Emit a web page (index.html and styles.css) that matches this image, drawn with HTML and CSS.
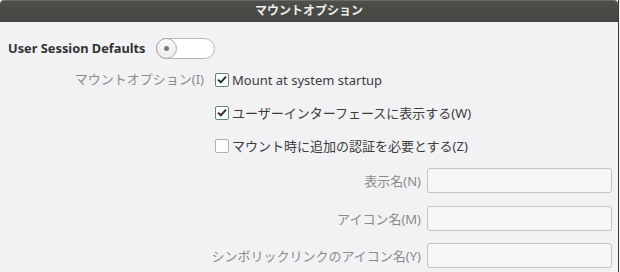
FILE: index.html
```html
<!DOCTYPE html>
<html lang="ja">
<head>
  <meta charset="UTF-8" />
  <title>マウントオプション</title>
  <link rel="stylesheet" href="styles.css">
</head>
<body>

<div class="window">
  <!-- Title bar -->
  <div class="titlebar">マウントオプション</div>

  <div class="content">
    <!-- Session defaults -->
    <div class="session-row">
      <span class="heading">User Session Defaults</span>
      <span class="switch"><span class="knob"></span></span>
    </div>

    <!-- Mount options -->
    <div class="options">
      <div class="opt-label">マウントオプション(I)</div>
      <div class="checks">
        <label class="check-row">
          <span class="box checked">
            <svg width="10" height="9" viewBox="0 0 10 9"><path d="M1 4.6 L3.8 7.3 L9 1.6" fill="none" stroke="#2e2e2e" stroke-width="2"/></svg>
          </span>
          Mount at system startup
        </label>
        <label class="check-row">
          <span class="box checked">
            <svg width="10" height="9" viewBox="0 0 10 9"><path d="M1 4.6 L3.8 7.3 L9 1.6" fill="none" stroke="#2e2e2e" stroke-width="2"/></svg>
          </span>
          ユーザーインターフェースに表示する(W)
        </label>
        <label class="check-row">
          <span class="box"></span>
          マウント時に追加の認証を必要とする(Z)
        </label>
      </div>
    </div>

    <!-- Name fields -->
    <div class="fields">
      <div class="field-row">
        <span class="field-label">表示名(N)</span>
        <span class="entry"></span>
      </div>
      <div class="field-row">
        <span class="field-label">アイコン名(M)</span>
        <span class="entry"></span>
      </div>
      <div class="field-row">
        <span class="field-label">シンボリックリンクのアイコン名(Y)</span>
        <span class="entry"></span>
      </div>
    </div>
  </div>
</div>

</body>
</html>
```

FILE: styles.css
```css
* {
  box-sizing: border-box;
}

html, body {
  margin: 0;
  padding: 0;
  background-color: #f2f2f4;
  font-family: 'Noto Sans', 'Noto Sans CJK JP', sans-serif;
  font-size: 13px;
  color: #3c3c3c;
}

.window {
  width: 619px;
  height: 272px;
  background-color: #f2f2f4;
  border-right: 1px solid #3a3b38;
}

.titlebar {
  height: 22px;
  background: linear-gradient(#4d4f4b, #444642);
  border-top: 1px solid #6a6c68;
  border-radius: 4px 4px 0 0;
  color: #eeeeec;
  font-weight: bold;
  font-size: 12px;
  text-align: center;
  line-height: 20px;
}

.content {
  padding-left: 8px;
}

.session-row {
  display: flex;
  align-items: center;
  gap: 10px;
  height: 22px;
  margin-top: 15px;
}

.heading {
  font-weight: bold;
  font-size: 12.8px;
  color: #333;
}

.switch {
  display: flex;
  align-items: center;
  width: 59px;
  height: 21px;
  border: 1px solid #b6b6b3;
  border-radius: 11px;
  background-color: #ffffff;
}

.knob {
  width: 21px;
  height: 21px;
  margin-left: -1px;
  border: 1px solid #a8a8a5;
  border-radius: 50%;
  background: linear-gradient(#fafafa, #ececea);
  display: flex;
  align-items: center;
  justify-content: center;
}

.knob::after {
  content: '';
  width: 5px;
  height: 5px;
  border-radius: 50%;
  background-color: #7a7a78;
}

.options {
  display: flex;
  margin-top: 4px;
}

.opt-label {
  width: 196px;
  height: 33px;
  line-height: 33px;
  text-align: right;
  color: #8b8b8b;
}

.checks {
  display: flex;
  flex-direction: column;
  margin-left: 11px;
}

.check-row {
  display: flex;
  align-items: center;
  gap: 3px;
  height: 33px;
}

.box {
  width: 14px;
  height: 14px;
  border: 1px solid #b0b0ae;
  border-radius: 2px;
  background-color: #fdfdfd;
  display: flex;
  align-items: center;
  justify-content: center;
}

.box.checked {
  border-color: #5e8a7e;
}

.fields {
  display: flex;
  flex-direction: column;
  gap: 12.5px;
  margin-top: 6px;
}

.field-row {
  display: flex;
  align-items: center;
  gap: 6px;
}

.field-label {
  width: 413px;
  text-align: right;
  color: #8b8b8b;
}

.entry {
  width: 185px;
  height: 25px;
  border: 1px solid #c3c3c0;
  border-radius: 3px;
  background-color: #f7f7f8;
}
```
